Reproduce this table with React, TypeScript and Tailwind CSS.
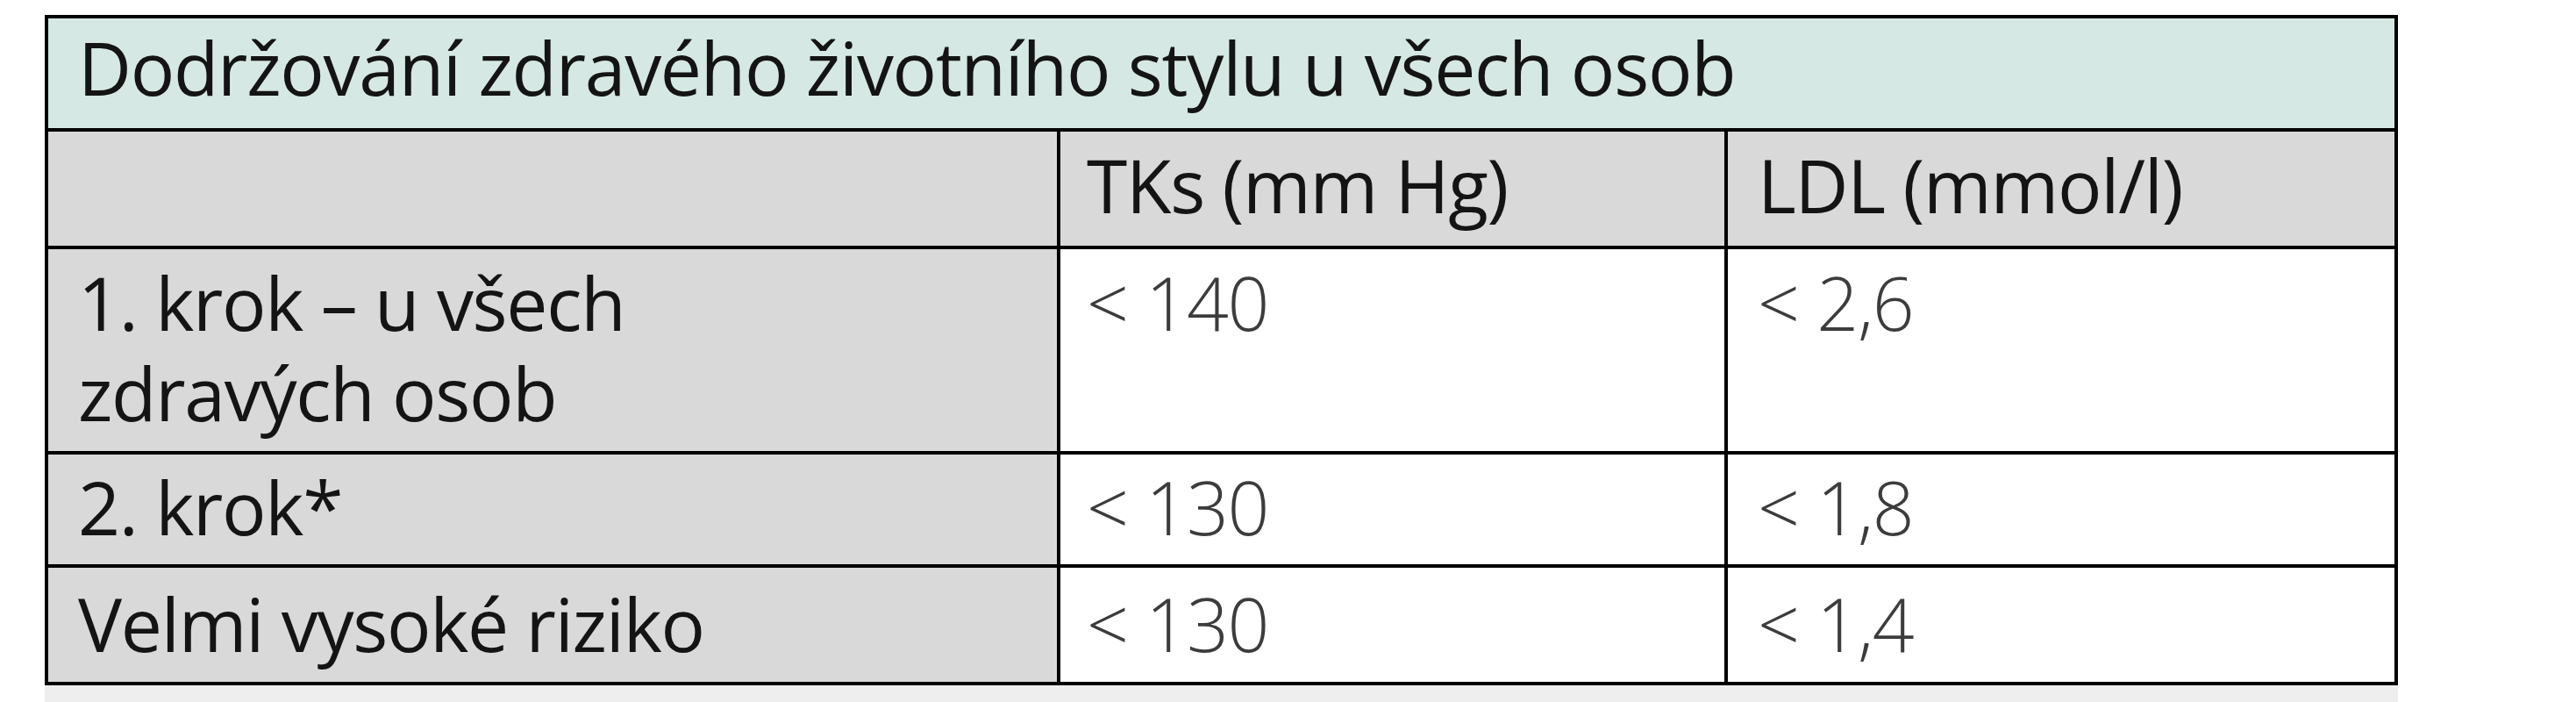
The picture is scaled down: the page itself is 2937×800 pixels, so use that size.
const font = { fontFamily: '"Open Sans", "Liberation Sans", sans-serif' }

const rows = [
  { label: ['1. krok – u všech', 'zdravých osob'], tks: '< 140', ldl: '< 2,6', h: 'h-[234px]', pt: 'pt-[9px]' },
  { label: ['2. krok*'], tks: '< 130', ldl: '< 1,8', h: 'h-[129px]', pt: 'pt-[8px]' },
  { label: ['Velmi vysoké riziko'], tks: '< 130', ldl: '< 1,4', h: 'h-[134px]', pt: 'pt-[12px]' },
]

export default function App() {
  return (
    <div className="w-[2937px] h-[800px] bg-white pl-[51px] pt-[17px] overflow-hidden" style={font}>
      <div className="w-[2683px]">
        <div className="border-4 border-black text-[84px] leading-[103px] tracking-[-0.015em] text-[#141414] font-medium">
          {/* Title */}
          <div className="h-[125px] bg-[#d6e8e3] pl-[34px] pt-[4px]">
            Dodržování zdravého životního stylu u všech osob
          </div>

          {/* Header */}
          <div className="grid grid-cols-[1150px_761px_1fr] h-[134px] border-t-4 border-black bg-[#d9d9d9]">
            <div />
            <div className="border-l-4 border-black pl-[30px] pt-[9px]">TKs (mm Hg)</div>
            <div className="border-l-4 border-black pl-[34px] pt-[9px]">LDL (mmol/l)</div>
          </div>

          {rows.map((r, i) => (
            <div key={i} className={`grid grid-cols-[1150px_761px_1fr] border-t-4 border-black ${r.h}`}>
              <div className={`bg-[#d9d9d9] pl-[34px] ${r.pt}`}>
                {r.label.map((l) => (
                  <div key={l}>{l}</div>
                ))}
              </div>
              <div className={`bg-white border-l-4 border-black pl-[30px] font-light text-[#3c3c3c] ${r.pt}`}>
                {r.tks}
              </div>
              <div className={`bg-white border-l-4 border-black pl-[34px] font-light text-[#3c3c3c] ${r.pt}`}>
                {r.ldl}
              </div>
            </div>
          ))}
        </div>
        <div className="h-[30px] bg-[#eeeeee]" />
      </div>
    </div>
  )
}
